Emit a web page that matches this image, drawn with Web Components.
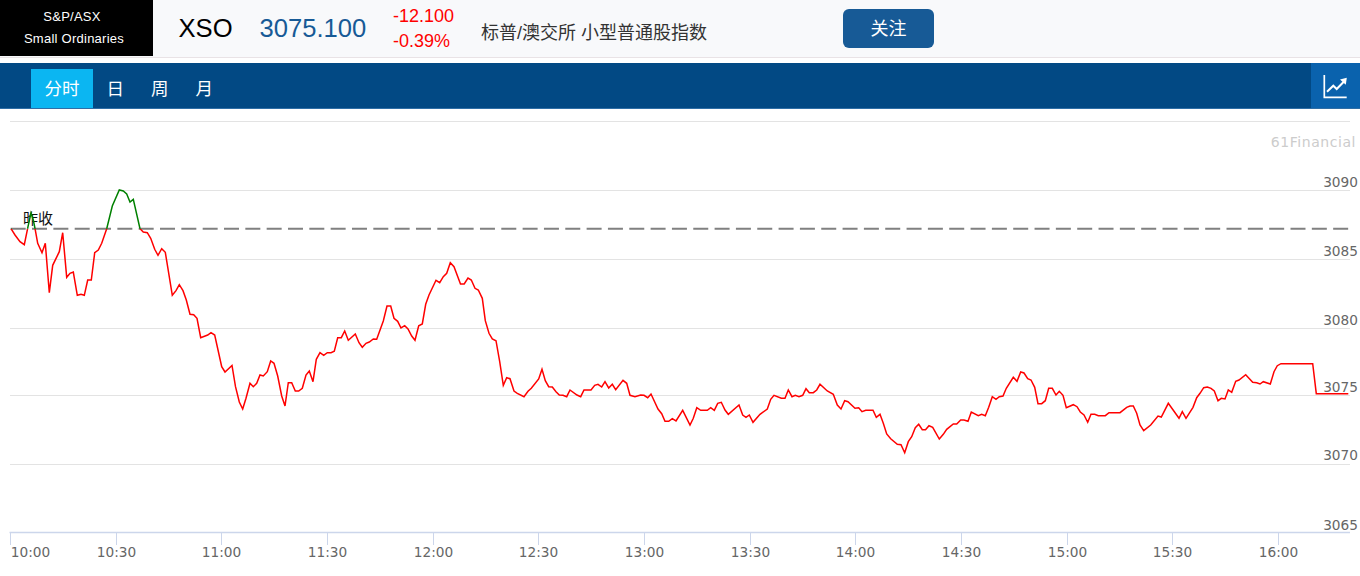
<!DOCTYPE html>
<html lang="zh">
<head>
<meta charset="utf-8">
<title>XSO</title>
<style>
	html, body { margin: 0; height: 100%; background: #fff; }
	body { font-family: "Liberation Sans", "Noto Sans CJK SC", sans-serif; overflow: hidden; }
</style>
</head>
<body>
<quote-header code="XSO" price="3075.100" change="-12.100" percent="-0.39%" action="关注">
	<span slot="logo">S&amp;P/ASX</span>
	<span slot="logo">Small Ordinaries</span>
	标普/澳交所 小型普通股指数
</quote-header>
<tab-bar>
	<tab-item active>分时</tab-item>
	<tab-item>日</tab-item>
	<tab-item>周</tab-item>
	<tab-item>月</tab-item>
</tab-bar>
<line-chart></line-chart>

<script>
const CJK = '"Liberation Sans", "Noto Sans CJK SC", sans-serif';

class QuoteHeader extends HTMLElement {
	constructor() {
		super();
		this.shadow = this.attachShadow({mode: 'open'});
	}

	connectedCallback() {
		const attr = name => this.getAttribute(name) || '';
		this.shadow.innerHTML = `
			<style>
				:host { display: flex; align-items: stretch; height: 57px; background: #f8f9fb;
					border-bottom: 1px solid #e9e3e6; font-family: ${CJK}; }
				.logo { box-sizing: border-box; width: 153px; height: 56px; padding: 0 5px 0 0; background: #000; color: #fff; font-size: 13px;
					display: flex; flex-direction: column; align-items: center; justify-content: center;
					gap: 6px; line-height: 16px; letter-spacing: .25px; }
				::slotted([slot=logo]) { display: block; }
				::slotted([slot=logo]:first-child) { padding-right: 4px; }
				.row { display: flex; align-items: center; padding-left: 25.5px; }
				.code { font-size: 25.6px; color: #000; width: 54px; margin-right: 27px; }
				.price { font-size: 25.6px; color: #175a96; width: 107px; margin-right: 26.5px; }
				.change { color: #f00; font-size: 18px; line-height: 25px; width: 61px; margin-right: 27px; }
				.name { color: #333; font-size: 18px; width: 227px; margin-right: 135px; white-space: nowrap; padding-top: 5px; }
				button { all: unset; box-sizing: border-box; width: 91px; height: 39px; margin-bottom: 1px;
					background: #175a96; color: #fff; font-size: 18px; text-align: center; line-height: 40px;
					border-radius: 6px; }
			</style>
			<div class="logo"><slot name="logo"></slot></div>
			<div class="row">
				<div class="code">${attr('code')}</div>
				<div class="price">${attr('price')}</div>
				<div class="change"><div>${attr('change')}</div><div>${attr('percent')}</div></div>
				<div class="name"><slot></slot></div>
				<button>${attr('action')}</button>
			</div>`;
	}
}

class TabBar extends HTMLElement {
	constructor() {
		super();
		this.shadow = this.attachShadow({mode: 'open'});
	}

	connectedCallback() {
		this.shadow.innerHTML = `
			<style>
				:host { display: flex; justify-content: space-between; height: 45px; margin-top: 5px;
					background: #024984; border-bottom: 1px solid #2f6ea6; }
				.tabs { display: flex; align-items: flex-end; padding-left: 31px; }
				.chart { width: 49px; height: 45px; background: #0a62ad; display: flex; }
			</style>
			<div class="tabs"><slot></slot></div>
			<div class="chart">
				<svg width="49" height="45" viewBox="1311 63 49 45">
					<path d="M1324.3 75V97.3H1346.7" fill="none" stroke="#fff" stroke-width="1.7"/>
					<path d="M1327 91.7L1333.3 85.7L1336.7 89L1344 81.5" fill="none" stroke="#fff" stroke-width="2"/>
					<path d="M1340 79.5L1346.8 77.8L1345.8 84.8Z" fill="#fff"/>
				</svg>
			</div>`;
	}
}

class TabItem extends HTMLElement {
	constructor() {
		super();
		this.shadow = this.attachShadow({mode: 'open'});
	}

	connectedCallback() {
		this.shadow.innerHTML = `
			<style>
				:host { display: block; height: 39px; padding: 0 13.5px; color: #fff; font-size: 17.5px;
					line-height: 41px; font-family: ${CJK}; }
				:host([active]) { background: #0bb6f2; }
			</style>
			<slot></slot>`;
	}
}

class LineChart extends HTMLElement {
	base = 228.7;
	points = [
		11,228.7, 15,235, 20,241.7, 24.3,244.7, 28,226.7, 31,213, 33.3,220, 35,228.3, 37.7,243.3, 42,252.7,
		45.3,243.3, 49.3,292.7, 52.7,265.3, 59.3,251.7, 62.7,232.7, 66.7,277.3, 70,273.3, 73.3,272, 77.3,295.3, 81,294.3,
		84.3,295.3, 87.7,280, 91.3,280, 94.7,252.7, 98.3,250, 101.7,243.3, 106.7,228.7, 112.3,206, 119.3,190, 123.3,191,
		126.7,194, 130,202, 133.3,199.3, 140,228.7, 143.3,232, 147.3,232.7, 150.7,238.3, 154.7,249.3, 158,255.3, 161.7,248.7,
		165.3,252.3, 172.3,295.3, 176,290.7, 179.3,284.7, 183,290.7, 186.3,300, 190,314.3, 193.7,314.7, 197,318.3, 200.7,337.7,
		207.7,335, 211,332.7, 214.7,335, 221.7,366.7, 225,372, 232,365.5, 235.5,386.7, 239.3,402, 242.7,409, 246,398.3,
		250,383.3, 253.3,386.7, 256.7,383.3, 260,375, 263.3,376, 267.3,371.7, 270.7,361, 274,363.3, 277.7,376, 281.7,396,
		285,406, 288.3,382.7, 291.7,382.7, 295.3,391, 298.7,391, 302.3,388.3, 306,375, 309.3,371, 313,381.7, 316.3,359.3,
		320,352.7, 323.7,355.3, 327.3,352.7, 331,352.7, 334.3,351.3, 337.7,337.7, 341.3,337.7, 344.7,331, 348.3,340.3, 355.3,334,
		359,342.7, 362.3,347.3, 366,343.3, 369.3,342, 373.3,339, 376.7,339.3, 383.3,321, 387,306, 390.7,306, 394,318.3,
		397.7,321.3, 401,328, 404.7,325.7, 408,329, 411.7,336, 415,340.3, 418.7,325.7, 422.3,324, 425.7,304.3, 429,295,
		436,280.3, 439.7,282.7, 443.3,276.7, 446.7,273.3, 450.3,262.7, 454,266.7, 460.5,284, 464.2,284, 468,278, 471.3,280,
		475,288.3, 478.3,290, 482.3,298.3, 485.3,320.7, 489,333.3, 492.3,339, 496,340.7, 499.7,361.7, 503.3,385.3, 506.7,377.7,
		510,378.7, 514,391, 517.3,393.3, 524,396.7, 528,391.3, 531.3,388.3, 538.7,379, 542,369.3, 545.3,380.7, 548.7,386.7,
		552.3,387, 556,391.7, 559.3,395, 563,395.3, 566.7,396.7, 570,390, 577,395, 580.7,396.7, 584,390, 591,390,
		594.7,385.3, 598,384.3, 601.7,387, 605,381.7, 608.7,388, 612.3,384.3, 615.7,389.7, 623,380.3, 626.7,383.3, 630,395.3,
		635,396.7, 640.7,395, 644,395.3, 647.7,397.7, 651,394, 658,409, 661.7,413.7, 665,421.3, 668.7,421.3, 672.3,418.7,
		676,421, 682.7,410.3, 690,425, 693.3,418.3, 696.8,407.7, 700.7,410.3, 707.3,410.3, 710.7,407.7, 714.3,410.3, 717.7,403.3,
		721.3,402.3, 725,410, 728.3,414.3, 739,405, 742.7,415, 746,417.3, 749.3,415, 753,422.3, 760,414.3, 767.3,409,
		770.7,399.3, 774,395.3, 781.3,398.3, 785,398.3, 788.3,390, 792,396.7, 795.3,395.3, 799,396.7, 802.7,395.3, 806,388.7,
		809.3,392.7, 813.3,392.7, 816.7,390, 820,384.3, 827.3,391, 833.3,394.3, 837.3,405, 841,409, 844.7,400.7, 848,401.7,
		855,408.3, 858.7,407.7, 862,411.7, 865.7,410.3, 873,410.3, 876.3,417.3, 880,414.3, 883.3,423.3, 886.7,434, 890.7,438.7,
		897.3,444.3, 901,444.7, 904.7,452.7, 908.3,441.7, 911.7,436.7, 915.3,427.7, 918.7,424.3, 922.3,429.7, 925.5,429.7, 929,425.7,
		932.7,427.3, 939.3,439, 943.3,434.3, 946.7,429.3, 953.3,424, 956.7,424, 960.7,420, 964,420, 968,421.3, 971.3,412,
		978.3,415.7, 981.7,414.3, 985.3,415.7, 988.7,407.3, 992.3,396.7, 996,399.3, 999.3,396.7, 1003,396, 1006.3,388.3, 1013.3,377.3,
		1017,381.3, 1020.7,372, 1024,373, 1027.7,378.7, 1031,380, 1034.7,387.3, 1038,403.7, 1041.7,403.7, 1045.3,400.7, 1048.7,388.3,
		1052.3,388.3, 1056,395, 1059.3,391.3, 1063,395.3, 1066.3,407.7, 1073.3,404.7, 1077,406.7, 1080.3,412, 1084,415, 1087.7,422.3,
		1091,414.3, 1094.7,414.3, 1098.3,415.7, 1105.3,415.7, 1109,412.7, 1120,412.7, 1126.7,407.3, 1130,406, 1133.3,406, 1136.7,413.3,
		1140,425, 1143.7,430.7, 1150.7,425, 1158,416, 1161.3,417, 1168.3,403.3, 1179,418.3, 1182.3,411.7, 1186,418.3, 1193,407.3,
		1196.7,397.7, 1200,393.3, 1203.7,387.7, 1207.3,387, 1211,388.3, 1214.3,391, 1218,400.7, 1221.3,398.3, 1225,399, 1228.3,390,
		1231.7,392.3, 1235.7,381.3, 1239,380, 1245.7,374.7, 1252.7,382.3, 1256.7,382.7, 1260,384, 1263.3,381.7, 1270.3,384, 1274,371.7,
		1277.3,365.7, 1281,363.7, 1312.7,363.7, 1316.3,393.7, 1348.3,393.7
	];
	grid = [121.5, 190.5, 259.5, 328.5, 395.5, 464.5];
	labels = [[3090, 187], [3085, 256], [3080, 325], [3075, 392], [3070, 460], [3065, 530]];
	times = ['10:00', '10:30', '11:00', '11:30', '12:00', '12:30', '13:00', '13:30', '14:00', '14:30', '15:00', '15:30', '16:00'];

	constructor() {
		super();
		this.shadow = this.attachShadow({mode: 'open'});
	}

	connectedCallback() {
		const base = this.base;
		const pts = this.points.join(' ');
		const gridLines = this.grid.map(y => `<line x1="10" x2="1350" y1="${y}" y2="${y}" stroke="#e3e3e3"/>`).join('');
		const yLabels = this.labels.map(([v, y]) => `<text x="1358" y="${y}" text-anchor="end">${v}</text>`).join('');
		const xTicks = this.times.map((t, i) => {
			const x = Math.round(10 + i * 105.67) + .5;
			const lx = i === 0 ? 30.5 : x;
			return `<line x1="${x}" x2="${x}" y1="532" y2="545" stroke="#ccd6eb"/>
				<text x="${lx}" y="557" text-anchor="middle">${t}</text>`;
		}).join('');

		this.shadow.innerHTML = `
			<style>
				:host { display: block; height: 467px; }
				svg { display: block; }
				text { font-family: "DejaVu Sans", sans-serif; font-size: 13.7px; fill: #666; }
				.mark { font-size: 14px; fill: #ccc; letter-spacing: .55px; }
				.prev { font-family: ${CJK}; font-size: 15px; fill: #111; }
			</style>
			<svg width="1360" height="467" viewBox="0 109 1360 467">
				<defs>
					<clipPath id="up"><rect x="0" y="109" width="1360" height="${base - 109}"/></clipPath>
					<clipPath id="down"><rect x="0" y="${base}" width="1360" height="400"/></clipPath>
				</defs>
				${gridLines}
				<line x1="9.5" x2="1350" y1="532.5" y2="532.5" stroke="#ccd6eb" stroke-width="1.3"/>
				${xTicks}
				${yLabels}
				<text class="mark" x="1356" y="147" text-anchor="end">61Financial</text>
				<text class="prev" x="23" y="223.5">昨收</text>
				<line x1="10.7" x2="1352" y1="${base}" y2="${base}" stroke="#808080" stroke-width="2" stroke-dasharray="15 6.33"/>
				<polyline points="${pts}" fill="none" stroke="#f00" stroke-width="1.5" clip-path="url(#down)"/>
				<polyline points="${pts}" fill="none" stroke="#008000" stroke-width="1.5" clip-path="url(#up)"/>
			</svg>`;
	}
}

customElements.define('quote-header', QuoteHeader);
customElements.define('tab-bar', TabBar);
customElements.define('tab-item', TabItem);
customElements.define('line-chart', LineChart);
</script>
</body>
</html>
